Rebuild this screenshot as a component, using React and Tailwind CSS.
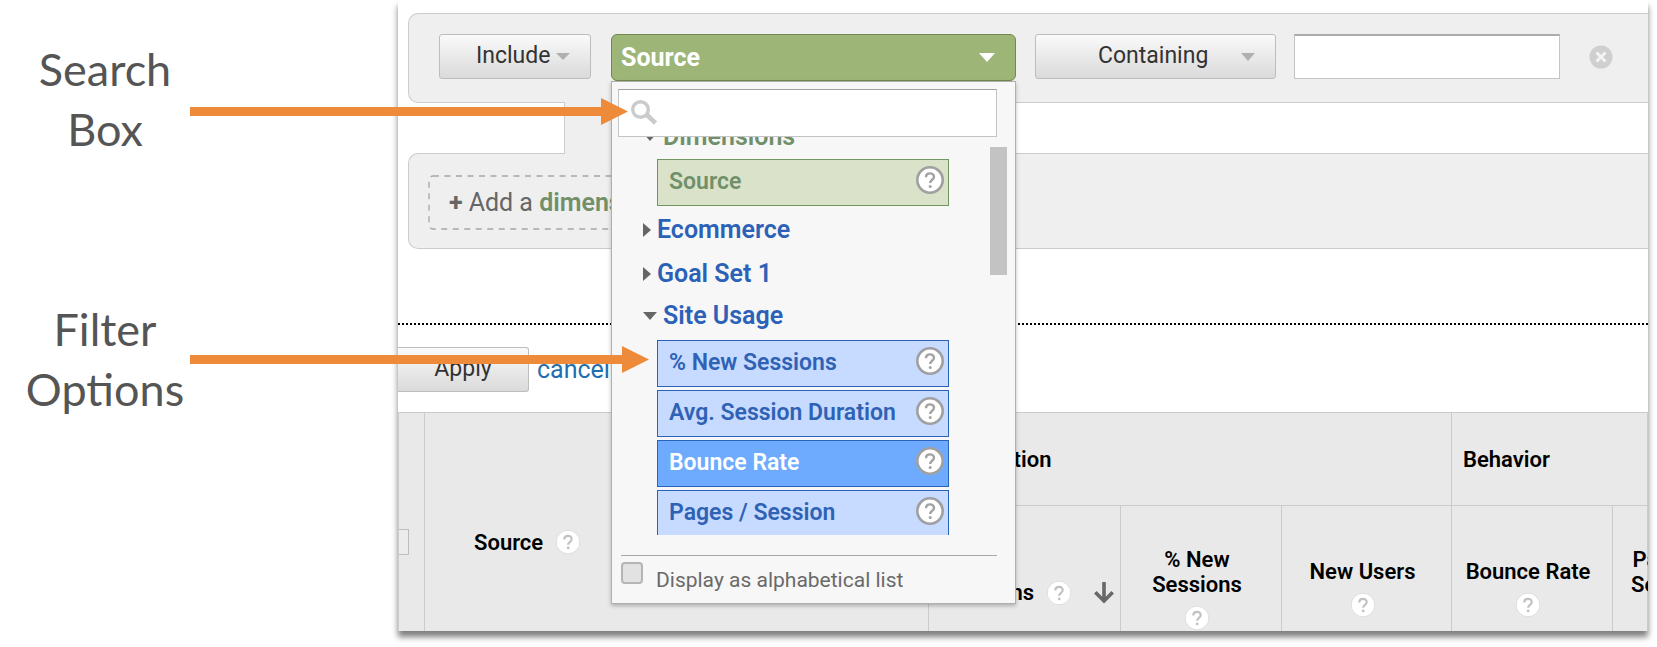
import { useState } from 'react';

const metrics = ['% New Sessions', 'Avg. Session Duration', 'Bounce Rate', 'Pages / Session'];

function Caret({ className }) {
    return (
        <svg className={className} viewBox="0 0 16 8" preserveAspectRatio="none" fill="currentColor" aria-hidden="true">
            <path d="M0 0h16L8 8z" />
        </svg>
    );
}

function HelpIcon({ outlined }) {
    return (
        <svg className={outlined ? 'mb-1.5 size-7 shrink-0' : 'size-[26px] shrink-0'} viewBox="0 0 28 28" fill="none" aria-hidden="true">
            <circle cx="14" cy="14" r="12.7" fill="#fff" stroke={outlined ? '#a0a0a0' : '#dcdcdc'} strokeWidth={outlined ? 2.6 : 1} />
            <path d="M10 11.2c0-5 8-5 8-.4 0 3-3.8 3-3.8 6.2" stroke={outlined ? '#a3a3a3' : '#c2c2c2'} strokeWidth="2.4" />
            <circle cx="14.2" cy="20.4" r="1.5" fill={outlined ? '#a3a3a3' : '#c2c2c2'} />
        </svg>
    );
}

function GroupRow({ label, open, className }) {
    return (
        <button type="button" className={`flex h-8 items-center text-[25px] leading-8 font-semibold ${className}`}>
            {open ? (
                <Caret className="mr-1.5 h-2 w-3.5 text-[#666]" />
            ) : (
                <svg className="mr-1.5 h-3.5 w-2 text-[#666]" viewBox="0 0 8 14" fill="currentColor" aria-hidden="true">
                    <path d="M0 0l8 7-8 7z" />
                </svg>
            )}
            {label}
        </button>
    );
}

function Option({ label, className }) {
    return (
        <button type="button" className={`flex h-[47px] w-[292px] shrink-0 items-center justify-between border pr-1 pl-[11px] text-[23px] font-semibold ${className}`}>
            {label}
            <HelpIcon outlined />
        </button>
    );
}

function SourceMenu() {
    const [search, setSearch] = useState('');
    const [alphabetical, setAlphabetical] = useState(false);

    return (
        <div className="absolute top-[47px] left-0 z-10 w-full border border-[#b0b0b0] bg-[#f7f7f7] shadow-[0_2px_4px_rgba(0,0,0,0.25)]">
            <label className="mt-[7px] mr-[18px] ml-1.5 flex h-12 items-center border border-[#c4c4c4] border-t-[#a0a0a0] bg-white pl-3">
                <svg className="size-[26px] shrink-0" viewBox="0 0 26 26" fill="none" stroke="#cbcbcb" aria-hidden="true">
                    <circle cx="9.5" cy="9.5" r="7.8" strokeWidth="3.4" />
                    <path d="M15.5 14.5l9 8.5" strokeWidth="4.6" />
                </svg>
                <input
                    type="text"
                    aria-label="Search dimensions and metrics"
                    value={search}
                    onChange={(e) => setSearch(e.target.value)}
                    className="h-full w-full min-w-0 px-2 text-[23px] outline-none"
                />
            </label>

            <div className="flex h-[398px] items-start justify-between overflow-hidden pr-2 pl-[31px]">
                <div className="-mt-4 flex flex-col items-start">
                    <GroupRow label="Dimensions" open className="text-[#71906a]" />
                    <Option label="Source" className="mt-1.5 ml-3.5 border-[#71975f] bg-[#dae3ca] text-[#71906a]" />
                    <GroupRow label="Ecommerce" className="mt-2 text-[#2b62b8]" />
                    <GroupRow label="Goal Set 1" className="mt-3 text-[#2b62b8]" />
                    <GroupRow label="Site Usage" open className="mt-2.5 text-[#2b62b8]" />
                    <div className="mt-2 ml-3.5 flex flex-col gap-[3px]">
                        {metrics.map((name) => (
                            <Option
                                key={name}
                                label={name}
                                className={name === 'Bounce Rate' ? 'border-[#2b62b8] bg-[#6eabff] text-white' : 'border-[#2b62b8] bg-[#c6dbff] text-[#2f62b5]'}
                            />
                        ))}
                    </div>
                </div>
                <div className="mt-2.5 h-32 w-[17px] bg-[#c3c3c3]" />
            </div>

            <label className="mt-5 mr-[18px] ml-[9px] flex h-12 border-t border-[#a9a9a9] text-[21px] leading-[48px] text-[#6a6a6a]">
                <input
                    type="checkbox"
                    checked={alphabetical}
                    onChange={(e) => setAlphabetical(e.target.checked)}
                    className="mt-1.5 mr-[13px] size-[22px] shrink-0 appearance-none rounded border-2 border-[#b5b5b5] bg-[#e2e2e2] checked:bg-[#2b62b8]"
                />
                Display as alphabetical list
            </label>
        </div>
    );
}

function FilterEditor() {
    const [value, setValue] = useState('');
    const grayButton = 'flex h-[45px] items-center rounded-[3px] border border-[#bdbdbd] bg-linear-to-b from-[#fafafa] to-[#dadada] text-[23px] text-[#333] shrink-0';

    return (
        <div className="pt-[13px] pl-2.5">
            <div className="flex h-[90px] rounded-l-[10px] border border-r-0 border-[#cbcbcb] bg-[#efefef] pt-5 pl-[30px]">
                <button type="button" className={`${grayButton} w-[152px] pl-9`}>
                    Include
                    <Caret className="ml-1.5 h-[7px] w-3.5 text-[#b0b0b0]" />
                </button>
                <div className="relative ml-5 w-[405px] shrink-0">
                    <button type="button" className="flex h-[47px] w-full items-center justify-between rounded-md border border-[#71894b] bg-[#9db677] pr-5 pl-[9px] text-[25px] font-bold text-white">
                        Source
                        <Caret className="h-[9px] w-4" />
                    </button>
                    <SourceMenu />
                </div>
                <button type="button" className={`${grayButton} ml-[19px] w-[241px] justify-between pr-5 pl-[62px]`}>
                    Containing
                    <Caret className="h-2 w-3.5 text-[#b0b0b0]" />
                </button>
                <input
                    type="text"
                    aria-label="Filter value"
                    value={value}
                    onChange={(e) => setValue(e.target.value)}
                    className="ml-[18px] h-[45px] w-[266px] shrink-0 border border-t-2 border-[#c4c4c4] border-t-[#ababab] bg-white px-2 text-[23px] outline-none"
                />
                <button type="button" aria-label="Remove filter" className="ml-[29px] flex h-[45px] shrink-0 items-center">
                    <svg className="size-6" viewBox="0 0 24 24" aria-hidden="true">
                        <circle cx="12" cy="12" r="11.5" fill="#cfcfcf" />
                        <path d="M7.5 7.5l9 9m0-9l-9 9" stroke="#f3f3f3" strokeWidth="3" />
                    </svg>
                </button>
            </div>

            <div className="relative -my-px ml-[156px] h-[52px] w-[400px] border-l border-[#cbcbcb] bg-[#efefef]" />

            <div className="h-24 rounded-l-[10px] border border-r-0 border-[#cbcbcb] bg-[#efefef] pt-[21px] pl-[19px]">
                <button type="button" className="relative flex h-[55px] w-[460px] items-center gap-1.5 pl-[21px] text-[25px] whitespace-nowrap text-[#666]">
                    <svg className="absolute inset-0 size-full" fill="none" aria-hidden="true">
                        <rect x="1" y="1" width="458" height="53" rx="4" stroke="#a6a6a6" strokeWidth="1.300" strokeDasharray="6 5.500" />
                    </svg>
                    <b>+</b>
                    <span>Add a <b className="font-semibold text-[#71906a]">dimension</b></span>
                </button>
            </div>

            <div className="mt-[74px] -ml-2.5 border-t-2 border-dotted border-black" />

            <div className="-ml-2.5 flex h-[87px] items-center gap-2 pt-0.5">
                <button type="button" className={`${grayButton} w-[131px] justify-center rounded-l-none border-l-0`}>Apply</button>
                <a href="#cancel" className="text-[25px] text-[#1f6fb0]">cancel</a>
            </div>
        </div>
    );
}

function ReportTable() {
    return (
        <table className="w-full table-fixed border-collapse bg-[#e9e9e9] text-[22px] leading-[25px] text-black [&_th]:border [&_th]:border-[#cbcbcb] [&_th]:p-0 [&_th]:font-semibold">
            <colgroup>
                <col className="w-[26px]" />
                <col className="w-[504px]" />
                <col className="w-[192px]" />
                <col className="w-[161px]" />
                <col className="w-[170px]" />
                <col className="w-[161px]" />
                <col />
            </colgroup>
            <thead>
                <tr className="h-[93px]">
                    <th rowSpan={2}>
                        <input type="checkbox" aria-label="Select all rows" className="-ml-4 block size-[26px] appearance-none border border-[#bdbdbd] bg-[#ececec]" />
                    </th>
                    <th rowSpan={2}>
                        <div className="flex items-center gap-3 pl-[49px]">Source <HelpIcon /></div>
                    </th>
                    <th colSpan={3} className="text-left"><div className="pl-[11px]">Acquisition</div></th>
                    <th colSpan={2} className="text-left"><div className="pl-[11px]">Behavior</div></th>
                </tr>
                <tr className="h-[166px]">
                    <th>
                        <div className="flex items-center justify-end pt-2 pr-1.5">
                            Sessions
                            <span className="mr-[22px] ml-3"><HelpIcon /></span>
                            <svg className="h-[22px] w-5" viewBox="0 0 20 22" fill="none" stroke="#686868" strokeWidth="3.6" aria-hidden="true">
                                <path d="M10 0v19M1.3 10.3L10 19l8.700-8.700" />
                            </svg>
                        </div>
                    </th>
                    <th><div className="flex flex-col items-center gap-2 pr-2"><span>% New<br />Sessions</span><HelpIcon /></div></th>
                    <th><div className="flex flex-col items-center gap-2 pr-2">New Users<HelpIcon /></div></th>
                    <th><div className="flex flex-col items-center gap-2 pr-2">Bounce Rate<HelpIcon /></div></th>
                    <th><div className="flex flex-col items-start gap-2 pl-[18px] whitespace-nowrap"><span>Pages /<br />Session</span><span className="pl-9"><HelpIcon /></span></div></th>
                </tr>
            </thead>
        </table>
    );
}

function Arrow({ className }) {
    return (
        <div className={`absolute left-[190px] z-20 flex items-center text-[#ee8b3a] ${className}`}>
            <div className="h-[9px] flex-1 bg-current" />
            <svg className="h-[27px] w-[27px]" viewBox="0 0 27 27" fill="currentColor" aria-hidden="true">
                <path d="M0 0l27 13.500L0 27z" />
            </svg>
        </div>
    );
}

export default function App() {
    return (
        <div className="relative flex h-screen overflow-hidden bg-white pr-[9px] pb-4 font-[Roboto,sans-serif]">
            <aside className="w-[398px] shrink-0 pt-[39px] font-[Lato,sans-serif] text-[45px] leading-[60px] text-[#555]">
                <p className="w-[210px] text-center">Search<br />Box</p>
                <p className="mt-[140px] w-[210px] text-center">Filter<br />Options</p>
            </aside>

            <main className="min-w-0 flex-1 overflow-hidden bg-white shadow-[0_6px_6px_rgba(0,0,0,0.5)]">
                <FilterEditor />
                <ReportTable />
            </main>

            <Arrow className="top-[98px] w-[438px]" />
            <Arrow className="top-[346px] w-[459px]" />
        </div>
    );
}
